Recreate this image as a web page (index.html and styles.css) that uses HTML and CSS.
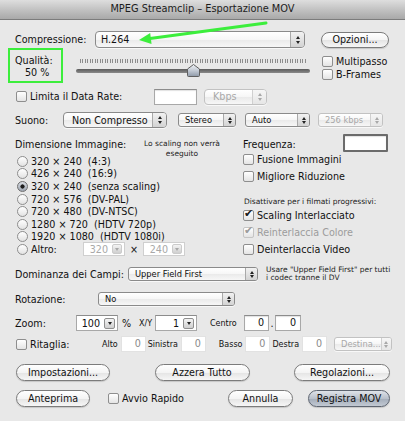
FILE: index.html
```html
<!DOCTYPE html>
<html lang="it">
<head>
    <meta charset="UTF-8">
    <title>MPEG Streamclip – Esportazione MOV</title>
    <link rel="stylesheet" href="styles.css">
</head>
<body>
<div class="window">
    <div class="titlebar">MPEG Streamclip – Esportazione MOV</div>

    <div class="dialog">
        <div class="row codec-row">
            <span class="codec-label">Compressione:</span>
            <div class="popup codec-popup"><span class="val">H.264</span><span class="arrows"></span></div>
            <button class="btn options-btn">Opzioni...</button>
        </div>

        <div class="row quality-row">
            <div class="quality-box">
                <div>Qualità:</div>
                <div class="quality-value">50 %</div>
            </div>
            <div class="slider">
                <div class="ticks"></div>
                <div class="track"></div>
                <svg class="thumb" width="13" height="13" viewBox="0 0 13 13">
                    <defs>
                        <linearGradient id="thumbFill" x1="0" y1="0" x2="0" y2="1">
                            <stop offset="0" stop-color="#eef1f5"/>
                            <stop offset="0.5" stop-color="#c3cad4"/>
                            <stop offset="1" stop-color="#8e99a8"/>
                        </linearGradient>
                    </defs>
                    <path d="M6.5 0.5 L12.5 5 L12.5 11.5 Q12.5 12.5 11.5 12.5 L1.5 12.5 Q0.5 12.5 0.5 11.5 L0.5 5 Z" fill="url(#thumbFill)" stroke="#5f5f5f"/>
                </svg>
            </div>
            <div class="stack">
                <label class="check"><span class="cb"></span>Multipasso</label>
                <label class="check"><span class="cb"></span>B-Frames</label>
            </div>
        </div>

        <div class="row rate-row">
            <label class="check rate-label"><span class="cb"></span>Limita il Data Rate:</label>
            <div class="field rate-field"></div>
            <div class="popup disabled rate-popup"><span class="val">Kbps</span><span class="arrows"></span></div>
        </div>

        <div class="row sound-row">
            <span class="sound-label">Suono:</span>
            <div class="popup sound-popup"><span class="val">Non Compresso</span><span class="arrows"></span></div>
            <div class="popup small stereo-popup"><span class="val">Stereo</span><span class="arrows"></span></div>
            <div class="popup small auto-popup"><span class="val">Auto</span><span class="arrows"></span></div>
            <div class="popup small disabled kbps-popup"><span class="val">256 kbps</span><span class="arrows"></span></div>
        </div>

        <div class="middle">
            <div class="size-col">
                <div class="size-head">
                    <span class="size-label">Dimensione Immagine:</span>
                    <span class="note scaling-note">Lo scaling non verrà<br>eseguito</span>
                </div>
                <label class="radio"><span class="rb"></span>320 × 240  (4:3)</label>
                <label class="radio"><span class="rb"></span>426 × 240  (16:9)</label>
                <label class="radio"><span class="rb on"></span>320 × 240  (senza scaling)</label>
                <label class="radio"><span class="rb"></span>720 × 576  (DV-PAL)</label>
                <label class="radio"><span class="rb"></span>720 × 480  (DV-NTSC)</label>
                <label class="radio"><span class="rb"></span>1280 × 720  (HDTV 720p)</label>
                <label class="radio"><span class="rb"></span>1920 × 1080  (HDTV 1080i)</label>
                <div class="radio other-row">
                    <span class="rb"></span><span class="other-label">Altro:</span>
                    <div class="combo disabled other-combo"><span class="val">320</span><span class="drop"></span></div>
                    <span class="times">×</span>
                    <div class="combo disabled other-combo"><span class="val">240</span><span class="drop"></span></div>
                </div>
            </div>

            <div class="rate-col">
                <div class="freq-head">
                    <span class="freq-label">Frequenza:</span>
                    <div class="field freq-field"></div>
                </div>
                <label class="check opt"><span class="cb"></span>Fusione Immagini</label>
                <label class="check opt"><span class="cb"></span>Migliore Riduzione</label>
                <div class="note progressive-note">Disattivare per i filmati progressivi:</div>
                <label class="check opt"><span class="cb checked"></span>Scaling Interlacciato</label>
                <label class="check opt disabled"><span class="cb checked"></span>Reinterlaccia Colore</label>
                <label class="check opt"><span class="cb"></span>Deinterlaccia Video</label>
            </div>
        </div>

        <div class="row field-row">
            <span class="field-label">Dominanza dei Campi:</span>
            <div class="popup small field-popup"><span class="val">Upper Field First</span><span class="arrows"></span></div>
            <span class="note field-note">Usare "Upper Field First" per tutti<br>i codec tranne il DV</span>
        </div>

        <div class="row rotate-row">
            <span class="rotate-label">Rotazione:</span>
            <div class="popup small rotate-popup"><span class="val">No</span><span class="arrows"></span></div>
        </div>

        <div class="row zoom-row">
            <span class="zoom-label">Zoom:</span>
            <div class="combo zoom-combo"><span class="val">100</span><span class="drop"></span></div>
            <span class="pct">%</span>
            <span class="tiny xy">X/Y</span>
            <div class="combo zoom-combo"><span class="val">1</span><span class="drop"></span></div>
            <span class="tiny centre">Centro</span>
            <div class="field num centre-x">0</div>
            <span class="dot">.</span>
            <div class="field num centre-y">0</div>
        </div>

        <div class="row crop-row">
            <label class="check crop-label"><span class="cb"></span>Ritaglia:</label>
            <span class="tiny crop-side">Alto</span><div class="field num crop-field">0</div>
            <span class="tiny crop-side">Sinistra</span><div class="field num crop-field">0</div>
            <span class="tiny crop-side basso">Basso</span><div class="field num crop-field">0</div>
            <span class="tiny crop-side">Destra</span><div class="field num crop-field">0</div>
            <div class="popup small disabled dest-popup"><span class="val">Destina...</span><span class="arrows"></span></div>
        </div>

        <div class="row buttons-row">
            <button class="btn settings-btn">Impostazioni...</button>
            <button class="btn reset-btn">Azzera Tutto</button>
            <button class="btn adjust-btn">Regolazioni...</button>
        </div>

        <div class="row footer-row">
            <button class="btn preview-btn">Anteprima</button>
            <label class="check fast-start"><span class="cb"></span>Avvio Rapido</label>
            <button class="btn cancel-btn">Annulla</button>
            <button class="btn default save-btn">Registra MOV</button>
        </div>
    </div>

    <!-- callout pointing at the codec menu -->
    <svg class="callout" width="405" height="421" viewBox="0 0 405 421">
        <line x1="266" y1="23" x2="150" y2="38.6" stroke="#3cee3c" stroke-width="3" stroke-linecap="round"/>
        <polygon points="139,40 150.2,33 151.6,44" fill="#3cee3c"/>
    </svg>
</div>
</body>
</html>
```

FILE: styles.css
```css
* {
    box-sizing: border-box;
}
body {
    margin: 0;
    font-family: "DejaVu Sans", "Liberation Sans", sans-serif;
    font-size: 9.6px;
    color: #111;
    background: #e8e8e8;
}
.window {
    position: relative;
    width: 405px;
    height: 421px;
    background: #e8e8e8;
    overflow: hidden;
}
.titlebar {
    height: 20px;
    line-height: 18px;
    text-align: center;
    font-size: 9.8px;
    color: #1c1c1c;
    background: linear-gradient(#dedede, #bdbdbd 60%, #a9a9a9);
    border-bottom: 1px solid #7c7c7c;
}
.dialog {
    padding-left: 14px;
}
.row {
    display: flex;
    align-items: center;
}
.note {
    font-size: 7.5px;
    line-height: 9.5px;
    color: #222;
}
.tiny {
    font-size: 8px;
}

/* controls */
.popup {
    display: flex;
    align-items: center;
    height: 16px;
    border: 1px solid #8a8a8a;
    border-radius: 4px;
    background: linear-gradient(#ffffff, #f6f6f6 50%, #eaeaea 51%, #f7f7f7);
    box-shadow: 0 1px 0 rgba(255, 255, 255, 0.7);
    overflow: hidden;
}
.popup .val {
    flex: 1;
    padding-left: 8px;
    white-space: nowrap;
}
.popup .arrows {
    align-self: stretch;
    width: 14px;
    border-left: 1px solid #a9a9a9;
    background: linear-gradient(#f2f2f2, #d3d3d3);
    display: flex;
    flex-direction: column;
    align-items: center;
    justify-content: center;
    gap: 2px;
}
.popup .arrows::before,
.popup .arrows::after {
    content: "";
    border-left: 2.5px solid transparent;
    border-right: 2.5px solid transparent;
}
.popup .arrows::before {
    border-bottom: 3px solid #222;
}
.popup .arrows::after {
    border-top: 3px solid #222;
}
.popup.small {
    height: 14px;
    border-radius: 3px;
    font-size: 8.3px;
}
.popup.small .val {
    padding-left: 6px;
}
.popup.small .arrows {
    width: 12px;
    gap: 1px;
}
.popup.disabled {
    color: #a8a8a8;
    border-color: #c2c2c2;
}
.popup.disabled .arrows {
    border-left-color: #d0d0d0;
    background: linear-gradient(#f6f6f6, #e6e6e6);
}
.popup.disabled .arrows::before {
    border-bottom-color: #a8a8a8;
}
.popup.disabled .arrows::after {
    border-top-color: #a8a8a8;
}

.field {
    height: 16px;
    background: #fff;
    border: 1px solid #a8a8a8;
    border-top-color: #8c8c8c;
    box-shadow: inset 0 1px 1px rgba(0, 0, 0, 0.12);
}
.field.num {
    text-align: right;
    padding-right: 4px;
    line-height: 14px;
}

.combo {
    display: flex;
    align-items: center;
    height: 16px;
    background: #fff;
    border: 1px solid #a8a8a8;
    border-top-color: #8c8c8c;
}
.combo .val {
    flex: 1;
    text-align: right;
    padding-right: 4px;
}
.combo .drop {
    width: 11px;
    height: 11px;
    margin-right: 2px;
    border: 1px solid #8f8f8f;
    border-radius: 2px;
    background: linear-gradient(#f4f4f4, #cfcfcf);
    display: flex;
    align-items: center;
    justify-content: center;
}
.combo .drop::after {
    content: "";
    border-left: 2.5px solid transparent;
    border-right: 2.5px solid transparent;
    border-top: 3px solid #222;
}
.combo.disabled {
    color: #a8a8a8;
    border-color: #cfcfcf;
}
.combo.disabled .drop {
    border-color: #cbcbcb;
}
.combo.disabled .drop::after {
    border-top-color: #a8a8a8;
}

.check,
.radio {
    display: flex;
    align-items: center;
    white-space: pre;
}
.cb {
    position: relative;
    width: 11px;
    height: 11px;
    margin-right: 3px;
    border: 1px solid #8e8e8e;
    border-radius: 2px;
    background: linear-gradient(#ffffff, #e4e4e4);
    flex: none;
}
.cb.checked::after {
    content: "✔";
    position: absolute;
    left: 0;
    top: -4px;
    font-size: 11px;
    color: #1b1b1b;
}
.check.disabled {
    color: #9c9c9c;
}
.check.disabled .cb {
    border-color: #c4c4c4;
}
.check.disabled .cb.checked::after {
    color: #9c9c9c;
}
.rb {
    width: 11px;
    height: 11px;
    margin-right: 3px;
    border: 1px solid #8e8e8e;
    border-radius: 50%;
    background: linear-gradient(#ffffff, #e2e2e2);
    flex: none;
}
.rb.on {
    background: radial-gradient(circle, #1d1d1d 0 1.8px, transparent 2.4px), linear-gradient(#d9dde3, #9da5b1);
    border-color: #6f6f6f;
}

.btn {
    height: 17px;
    padding: 0;
    font-family: inherit;
    font-size: 9.6px;
    color: #111;
    border: 1px solid #7b7b7b;
    border-radius: 9px;
    background: linear-gradient(#ffffff, #f4f4f4 50%, #e4e4e4 51%, #f6f6f6);
    box-shadow: 0 1px 1px rgba(0, 0, 0, 0.15);
}
.btn.default {
    border-color: #5d6470;
    background: linear-gradient(#dfe3e9, #b9c0cb 50%, #a3acb9 51%, #c2c9d3);
}

/* codec + quality */
.codec-row {
    margin-top: 11px;
    height: 17px;
}
.codec-label {
    width: 81px;
    padding-left: 1px;
}
.codec-popup {
    width: 210px;
    height: 17px;
}
.codec-popup .val {
    padding-left: 5px;
}
.options-btn {
    width: 68px;
    height: 16px;
    margin-left: 16px;
}

.quality-row {
    align-items: flex-start;
    height: 35px;
}
.quality-box {
    width: 55px;
    height: 35px;
    margin-left: -6px;
    padding: 5px 0 0 5px;
    border: 2px solid #3cee3c;
    line-height: 12px;
}
.quality-value {
    padding-left: 10px;
}
.slider {
    position: relative;
    width: 235px;
    height: 35px;
    margin-left: 12px;
}
.ticks {
    height: 4px;
    margin: 11px 3px 0 5px;
    background: repeating-linear-gradient(90deg, #8c8c8c 0 1px, transparent 1px 2.5px);
}
.track {
    height: 4px;
    margin: 6px 0 0 1px;
    border-radius: 2px;
    background: linear-gradient(#5b5b5b, #8a8a8a);
}
.thumb {
    position: absolute;
    left: 112px;
    top: 16px;
}
.stack {
    display: flex;
    flex-direction: column;
    gap: 1px;
    margin-left: 12px;
    padding-top: 7px;
}
.stack .check {
    height: 12px;
}

/* data rate + sound */
.rate-row {
    margin-top: 5px;
    height: 17px;
}
.rate-label {
    width: 138px;
    margin-left: 2px;
}
.rate-field {
    width: 43px;
}
.rate-popup {
    width: 63px;
    margin-left: 7px;
}
.sound-row {
    margin-top: 7px;
    height: 16px;
}
.sound-label {
    width: 49px;
    padding-left: 1px;
}
.sound-popup {
    width: 104px;
}
.stereo-popup {
    width: 58px;
    margin-left: 11px;
}
.auto-popup {
    width: 65px;
    margin-left: 9px;
}
.kbps-popup {
    width: 65px;
    margin-left: 8px;
}

/* image size / frame rate */
.middle {
    display: flex;
    margin-top: 6px;
}
.size-col {
    width: 229px;
}
.size-head {
    display: flex;
    height: 21px;
}
.size-label {
    width: 126px;
    padding: 5px 0 0 1px;
    line-height: 12px;
}
.scaling-note {
    width: 84px;
    padding-top: 5px;
    text-align: center;
}
.radio {
    height: 12.6px;
    padding-left: 3px;
}
.other-label {
    width: 52px;
}
.other-combo {
    width: 42px;
    height: 14px;
}
.other-combo .drop {
    width: 10px;
    height: 10px;
}
.times {
    width: 18px;
    text-align: center;
}

.freq-head {
    display: flex;
    align-items: flex-start;
    height: 18px;
}
.freq-label {
    width: 100px;
    padding-top: 5px;
    line-height: 12px;
}
.freq-field {
    width: 45px;
    height: 18px;
    border: 2px solid #6b6b6b;
    border-radius: 1px;
}
.opt {
    height: 14px;
    margin-top: 3px;
}
.freq-head + .opt {
    margin-top: 0;
}
.progressive-note {
    height: 12px;
    margin-top: 13px;
    line-height: 12px;
    padding-left: 1px;
}
.progressive-note + .opt {
    margin-top: 0;
}

/* field dominance, rotation, zoom, crop */
.field-row {
    margin-top: 10px;
    height: 16px;
}
.field-label {
    width: 114px;
    padding-left: 1px;
}
.field-popup {
    width: 130px;
}
.field-note {
    margin-left: 8px;
    line-height: 8.5px;
}
.rotate-row {
    margin-top: 9px;
    height: 16px;
}
.rotate-label {
    width: 84px;
    padding-left: 1px;
}
.rotate-popup {
    width: 137px;
}
.zoom-row {
    margin-top: 8px;
    height: 16px;
}
.zoom-label {
    width: 62px;
    padding-left: 1px;
}
.zoom-combo {
    width: 42px;
}
.pct {
    width: 21px;
    padding-left: 4px;
}
.xy {
    width: 16px;
}
.centre {
    width: 47px;
    padding-left: 13px;
}
.centre-x {
    width: 25px;
}
.dot {
    width: 6px;
    text-align: center;
}
.centre-y {
    width: 26px;
}
.crop-row {
    margin-top: 5px;
    height: 16px;
}
.crop-label {
    width: 84px;
    margin-left: 2px;
}
.crop-side {
    padding: 0 3px 0 2px;
}
.crop-side.basso {
    padding-left: 13px;
}
.crop-field {
    width: 25px;
    border-color: #e2e2e2;
    box-shadow: none;
    color: #8a8a8a;
}
.dest-popup {
    width: 58px;
    margin-left: 7px;
}

/* buttons */
.buttons-row {
    justify-content: space-between;
    margin: 12px 15px 0 2px;
}
.settings-btn {
    width: 94px;
}
.reset-btn {
    width: 95px;
}
.adjust-btn {
    width: 96px;
}
.footer-row {
    margin: 9px 0 0 2px;
}
.preview-btn {
    width: 74px;
}
.fast-start {
    margin-left: 18px;
    width: 120px;
}
.cancel-btn {
    width: 65px;
}
.save-btn {
    width: 82px;
    margin-left: 15px;
}

.callout {
    position: absolute;
    left: 0;
    top: 0;
    pointer-events: none;
}
```
